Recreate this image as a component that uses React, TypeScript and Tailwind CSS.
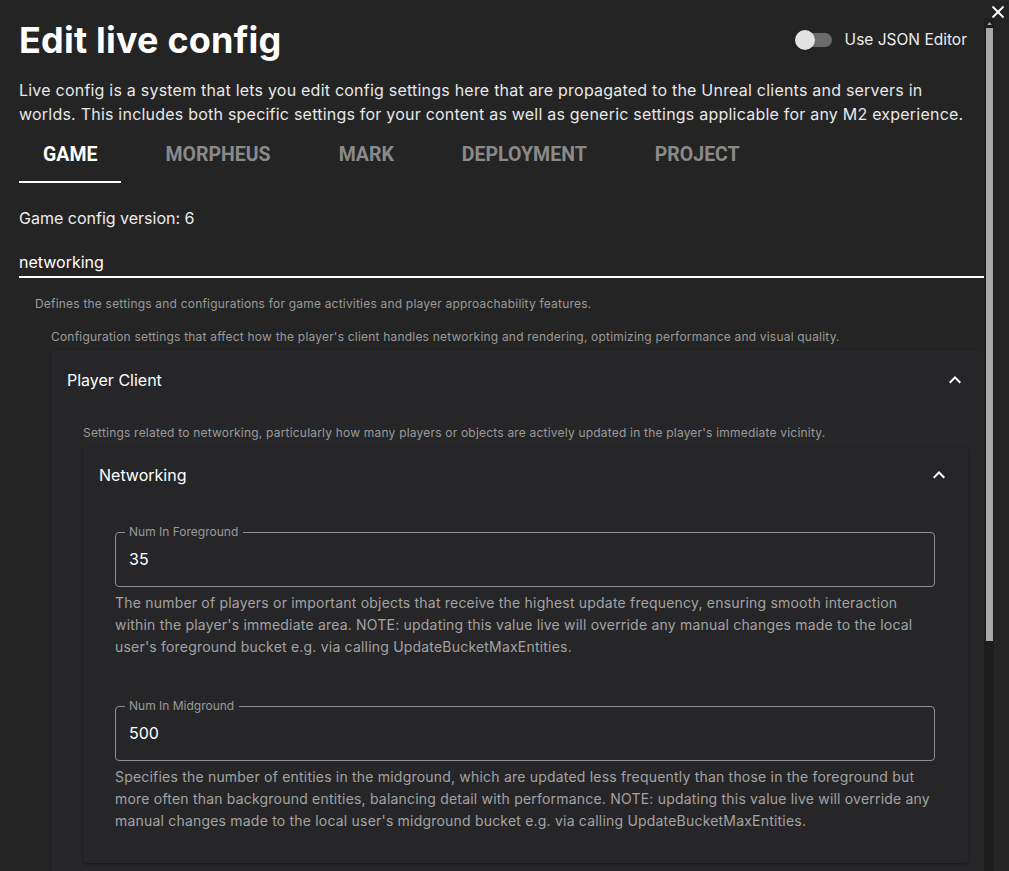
const sans = "font-['Inter','Noto_Sans',sans-serif]"

function Chevron(): JSX.Element {
  return (
    <svg viewBox="0 0 24 24" className="h-6 w-6 fill-white" aria-hidden="true">
      <path d="M12 8l-6 6 1.41 1.41L12 10.83l4.59 4.58L18 14z" />
    </svg>
  )
}

function Field({ label, value, help }: { label: string; value: string; help: string }): JSX.Element {
  return (
    <div>
      <fieldset className="rounded-[4px] border border-[#8f8f8f] px-[13px] pb-[15px]">
        <legend className="-ml-[4px] pl-[4px] pr-[5px] text-[12px] leading-[14px] text-[#9a9a9a]">
          {label}
        </legend>
        <div className="pt-[8px] text-[16px] leading-[24px] text-white">{value}</div>
      </fieldset>
      <p className="mt-[5px] text-[14px] leading-[22px] tracking-[0.2px] text-[#a3a3a3]">{help}</p>
    </div>
  )
}

const tabs = ['GAME', 'MORPHEUS', 'MARK', 'DEPLOYMENT', 'PROJECT']

export default function App(): JSX.Element {
  return (
    <div className={`relative flex h-[871px] w-full overflow-hidden bg-[#242424] ${sans}`}>
      <div className="min-w-0 flex-1">
        <div className="flex items-center justify-between pl-[19px] pr-[17px] pt-[20px]">
          <h1 className="text-[36px] font-bold leading-[40px] tracking-[0.2px] text-white">Edit live config</h1>
          <div className="flex items-center gap-[13px]">
            <div className="relative h-[20px] w-[37px]">
              <div className="absolute left-[2px] top-[3px] h-[14px] w-[35px] rounded-full bg-[#6b6b6b]" />
              <div className="absolute left-0 top-0 h-[20px] w-[20px] rounded-full bg-[#e2e2e2] shadow" />
            </div>
            <span className="text-[15.5px] text-[#ececec]">Use JSON Editor</span>
          </div>
        </div>

        <p className="mt-[18px] pl-[19px] pr-[6px] text-[16px] leading-[24px] tracking-[0.22px] text-[#e8e8e8]">
          Live config is a system that lets you edit config settings here that are propagated to the Unreal clients and
          servers in worlds. This includes both specific settings for your content as well as generic settings applicable
          for any M2 experience.
        </p>

        <div className="flex gap-[20px] pl-[19px] font-['Roboto',sans-serif]">
          {tabs.map((t, i) => (
            <div
              key={t}
              className={`flex h-[57px] flex-col justify-center border-b-2 px-[24px] pt-[2px] text-[19.5px] font-bold ${
                i === 0 ? 'border-white text-white' : 'border-transparent text-[#8a8a8a]'
              }`}
            >
              {t}
            </div>
          ))}
        </div>

        <div className="mt-[23px] pl-[19px] text-[16px] leading-[24px] text-[#ededed]">Game config version: 6</div>

        <div className="ml-[19px] mt-[20px] border-b-2 border-white pb-[2px] text-[16px] leading-[24px] text-white">
          networking
        </div>

        <p className="mt-[18px] pl-[35px] text-[12px] leading-[16px] tracking-[0.2px] text-[#9a9a9a]">
          Defines the settings and configurations for game activities and player approachability features.
        </p>
        <p className="mt-[17px] pl-[51px] text-[12px] leading-[16px] tracking-[0.2px] text-[#9a9a9a]">
          Configuration settings that affect how the player's client handles networking and rendering, optimizing
          performance and visual quality.
        </p>

        <section className="ml-[51px] mt-[5px] rounded-[4px] bg-[#262628] shadow-[0_1px_3px_rgba(0,0,0,0.35)]">
          <div className="flex h-[59px] items-center justify-between pl-[16px] pr-[17px]">
            <span className="text-[16px] text-white">Player Client</span>
            <Chevron />
          </div>
          <div className="pb-[16px] pl-[32px] pr-[16px]">
            <p className="mt-[16px] text-[12px] leading-[16px] tracking-[0.2px] text-[#9a9a9a]">
              Settings related to networking, particularly how many players or objects are actively updated in the
              player's immediate vicinity.
            </p>
            <section className="mt-[7px] rounded-[4px] bg-[#262628] shadow-[0_1px_3px_rgba(0,0,0,0.45)]">
              <div className="flex h-[54px] items-center justify-between pl-[16px] pr-[17px]">
                <span className="text-[16px] text-white">Networking</span>
                <Chevron />
              </div>
              <div className="flex flex-col gap-[41px] pb-[31px] pl-[32px] pr-[33px] pt-[23px]">
                <Field
                  label="Num In Foreground"
                  value="35"
                  help="The number of players or important objects that receive the highest update frequency, ensuring smooth interaction within the player's immediate area. NOTE: updating this value live will override any manual changes made to the local user's foreground bucket e.g. via calling UpdateBucketMaxEntities."
                />
                <Field
                  label="Num In Midground"
                  value="500"
                  help="Specifies the number of entities in the midground, which are updated less frequently than those in the foreground but more often than background entities, balancing detail with performance. NOTE: updating this value live will override any manual changes made to the local user's midground bucket e.g. via calling UpdateBucketMaxEntities."
                />
              </div>
            </section>
          </div>
        </section>
      </div>

      <div className="mt-[18px] flex w-[10px] shrink-0 flex-col bg-[#1d1d1d]">
        <div className="flex h-[10px] items-center justify-center">
          <svg viewBox="0 0 6 4" className="h-[3px] w-[5px] fill-[#a8a8a8]" aria-hidden="true">
            <path d="M3 0l3 4H0z" />
          </svg>
        </div>
        <div className="ml-[2px] h-[613px] w-[7px] bg-[#a8a8a8]" />
      </div>
      <div className="w-[15px] shrink-0" />

      <button type="button" aria-label="Close" className="absolute right-[4px] top-[5px] text-white">
        <svg viewBox="0 0 14 14" className="h-[14px] w-[14px]" aria-hidden="true">
          <path d="M1.5 1.5l11 11M12.5 1.5l-11 11" stroke="currentColor" strokeWidth="1.8" />
        </svg>
      </button>
    </div>
  )
}
